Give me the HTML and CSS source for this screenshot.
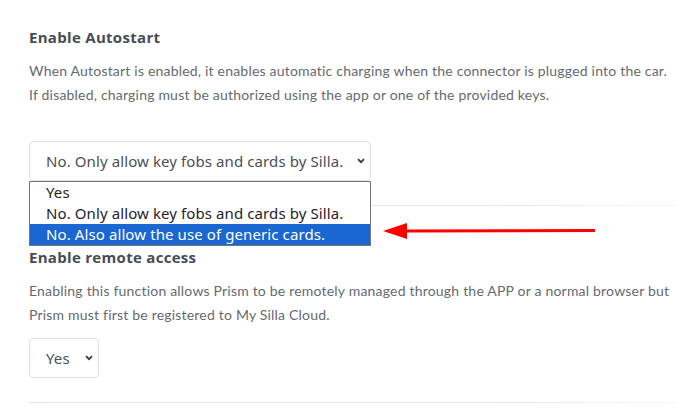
FILE: index.html
```html
<!DOCTYPE html>
<html>
<head>
<meta charset="utf-8">
<link rel="stylesheet" href="styles.css">
</head>
<body>
<div class="page">
  <section class="setting first">
    <h3 class="title">Enable Autostart</h3>
    <p class="desc">When Autostart is enabled, it enables automatic charging when the connector is plugged into the car.<br>If disabled, charging must be authorized using the app or one of the provided keys.</p>
    <div class="select-wrap">
      <div class="select wide">
        <span class="value">No. Only allow key fobs and cards by Silla.</span>
        <svg class="chev" width="8" height="6" viewBox="0 0 8 6"><path d="M1 1.2 L4 4.2 L7 1.2" fill="none" stroke="#343a40" stroke-width="1.8"/></svg>
      </div>
      <ul class="options">
        <li>Yes</li>
        <li>No. Only allow key fobs and cards by Silla.</li>
        <li class="active">No. Also allow the use of generic cards.</li>
      </ul>
      <svg class="arrow" width="216" height="20" viewBox="0 0 216 20"><path d="M2 10 L26 2 L26 8.5 L214 8 L214 11 L26 11.5 L26 18 Z" fill="#ff0000"/></svg>
    </div>
  </section>
  <hr class="divider">
  <section class="setting">
    <h3 class="title">Enable remote access</h3>
    <p class="desc">Enabling this function allows Prism to be remotely managed through the APP or a normal browser but Prism must first be registered to My Silla Cloud.</p>
    <div class="select small">
      <span class="value">Yes</span>
      <svg class="chev" width="8" height="6" viewBox="0 0 8 6"><path d="M1 1.2 L4 4.2 L7 1.2" fill="none" stroke="#343a40" stroke-width="1.8"/></svg>
    </div>
  </section>
  <hr class="divider">
</div>
</body>
</html>
```

FILE: styles.css
```css
html, body {
  margin: 0;
  padding: 0;
  background: #ffffff;
}
body {
  font-family: "Lato", "Open Sans", sans-serif;
}
.page {
  padding: 0 23px 0 29px;
}
.setting {
  display: flex;
  flex-direction: column;
  align-items: flex-start;
}
.title {
  margin: 0;
  font-family: "Open Sans", "Lato", sans-serif;
  font-size: 15px;
  font-weight: 700;
  letter-spacing: 0.3px;
  color: #474c54;
  line-height: 20px;
}
.first .title {
  margin-top: 27px;
}
.desc {
  margin: 12px 0 11px 0;
  font-size: 14px;
  letter-spacing: 0.2px;
  line-height: 24px;
  color: #666a70;
}
.first .desc {
  margin-bottom: 34px;
}
.select-wrap {
  position: relative;
}
.select {
  box-sizing: border-box;
  display: flex;
  align-items: center;
  justify-content: space-between;
  height: 40px;
  border: 1px solid #dee2e6;
  border-radius: 4px;
  padding: 0 5px 0 16px;
  font-family: "Noto Sans", "Open Sans", sans-serif;
  font-size: 15px;
  letter-spacing: 0.1px;
  color: #495057;
  background: #fff;
}
.select.wide {
  width: 342px;
}
.select.small {
  width: 70px;
  height: 40px;
}
.chev {
  flex: none;
}
.options {
  position: absolute;
  left: 0;
  top: 40px;
  width: 342px;
  box-sizing: border-box;
  margin: 0;
  padding: 0;
  list-style: none;
  border: 1px solid #767676;
  background: #fff;
  font-family: "Noto Sans", "Open Sans", sans-serif;
  font-size: 15px;
  letter-spacing: 0.1px;
  color: #1f2328;
  z-index: 2;
}
.options li {
  height: 21px;
  line-height: 21px;
  padding-left: 16px;
}
.options li.active {
  background: #1a67d2;
  color: #ffffff;
}
.arrow {
  position: absolute;
  left: 352px;
  top: 80px;
}
.divider {
  border: 0;
  height: 1px;
  margin: 24px 0 0 0;
  background: linear-gradient(to right, #e2e2e8, #e8e8ea 70%, #f6f6f6);
}
.divider + .setting .title {
  margin-top: 41px;
}
```
